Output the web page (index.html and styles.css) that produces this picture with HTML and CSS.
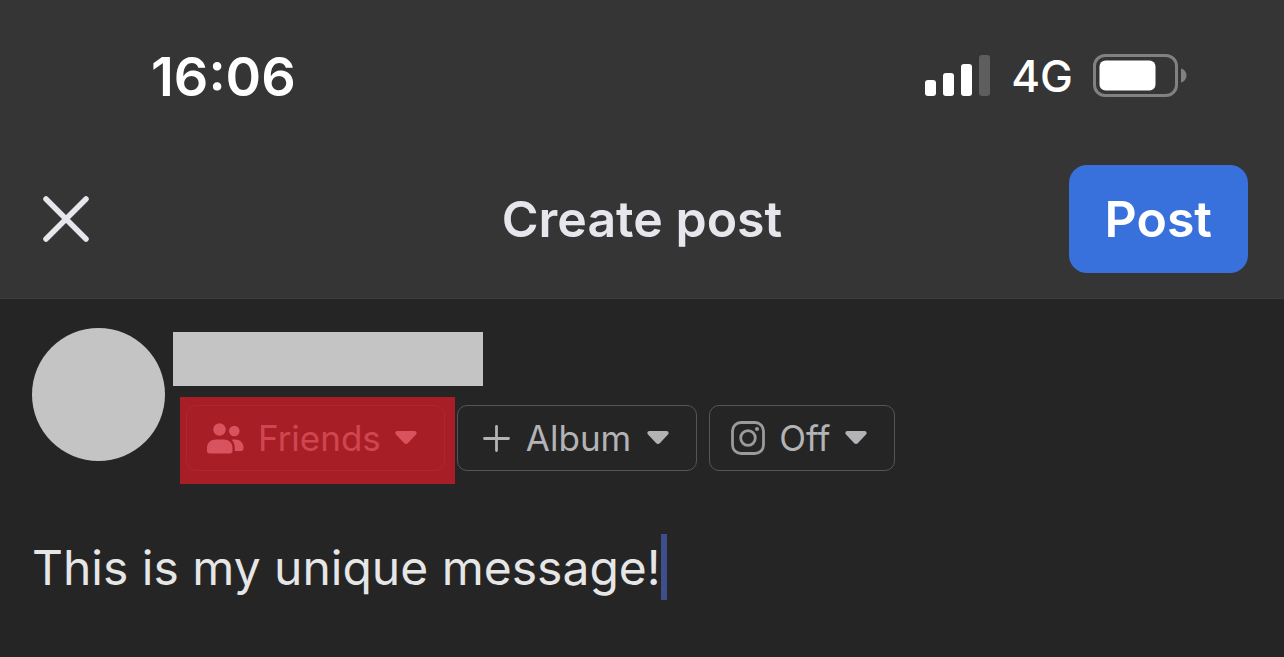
FILE: index.html
```html
<!DOCTYPE html>
<html lang="en">

<head>
    <meta charset="UTF-8">
    <meta name="viewport" content="width=device-width, initial-scale=1.0">
    <title>Create post</title>
    <link rel="stylesheet" href="styles.css">
</head>

<body>
    <div class="status-bar">
        <time class="clock">16:06</time>
        <div class="status-icons">
            <svg class="signal" width="66" height="42" viewBox="0 0 66 42" aria-hidden="true">
                <rect x="0" y="25" width="11" height="16" rx="3" fill="#fff" />
                <rect x="18" y="18" width="11" height="23" rx="3" fill="#fff" />
                <rect x="36" y="9" width="11" height="32" rx="3" fill="#fff" />
                <rect x="54" y="0" width="11" height="41" rx="3" fill="#5e5e5e" />
            </svg>
            <span class="network">4G</span>
            <svg class="battery" width="94" height="44" viewBox="0 0 94 44" aria-hidden="true">
                <rect x="1.5" y="1.5" width="82" height="40" rx="10.5" fill="none" stroke="#818181" stroke-width="3" />
                <rect x="6.5" y="6.5" width="56" height="30" rx="6" fill="#fff" />
                <path d="M88 14.5c3.5 1 5.5 4 5.5 7s-2 6-5.5 7z" fill="#818181" />
            </svg>
        </div>
    </div>

    <header class="header">
        <button type="button" class="close" aria-label="Close">
            <svg width="46" height="46" viewBox="0 0 46 46" aria-hidden="true">
                <path d="M3 3l40 40M43 3L3 43" fill="none" stroke="#e6e6ec" stroke-width="5.5" stroke-linecap="round" />
            </svg>
        </button>
        <h1>Create post</h1>
        <button type="submit" form="post-form" class="post">Post</button>
    </header>

    <main>
        <div class="author">
            <div class="avatar"></div>
            <div class="details">
                <div class="name"></div>
                <div class="options">
                    <div class="highlight">
                        <button type="button" class="chip friends">
                            <svg width="37" height="32" viewBox="0 0 37 32" aria-hidden="true">
                                <circle cx="12.5" cy="7.5" r="6.2" />
                                <circle cx="27.3" cy="9" r="5.3" />
                                <path d="M0 29V26c0-5.500 4-8.500 9-8.500h7.500c5 0 9 3 9 8.500v3c0 1.500-1 2.500-2.500 2.500H2.500C1 31.500 0 30.500 0 29z" />
                                <path d="M24.500 17.500H28c5 0 8.500 3.500 8.500 8v1c0 1.500-1 2.500-2.500 2.500h-6.200V26c0-3.500-1.300-6.500-3.300-8.500z" />
                            </svg>
                            <span>Friends</span>
                            <svg class="arrow" width="22" height="14" viewBox="0 0 22 14" aria-hidden="true">
                                <path d="M2.5 0h17c2 0 2.8 2 1.5 3.5l-8 8.500c-1.200 1.300-2.800 1.300-4 0L1 3.500C-.3 2 .5 0 2.500 0z" />
                            </svg>
                        </button>
                    </div>
                    <button type="button" class="chip album">
                        <svg width="27" height="27" viewBox="0 0 27 27" aria-hidden="true">
                            <path d="M13.5 1.5v24M1.5 13.5h24" fill="none" stroke="#b3b3b6" stroke-width="2.8" stroke-linecap="round" />
                        </svg>
                        <span>Album</span>
                        <svg class="arrow" width="22" height="14" viewBox="0 0 22 14" aria-hidden="true">
                            <path d="M2.5 0h17c2 0 2.8 2 1.5 3.5l-8 8.500c-1.200 1.300-2.800 1.300-4 0L1 3.500C-.3 2 .5 0 2.500 0z" />
                        </svg>
                    </button>
                    <button type="button" class="chip">
                        <svg width="34" height="34" viewBox="0 0 34 34" aria-hidden="true">
                            <g fill="none" stroke="#9b9b9d" stroke-width="2.8">
                                <rect x="1.5" y="1.5" width="31" height="31" rx="8.5" />
                                <circle cx="17" cy="17" r="7.3" />
                            </g>
                            <circle cx="26" cy="8" r="2" fill="#9b9b9d" />
                        </svg>
                        <span>Off</span>
                        <svg class="arrow" width="22" height="14" viewBox="0 0 22 14" aria-hidden="true">
                            <path d="M2.5 0h17c2 0 2.8 2 1.5 3.5l-8 8.500c-1.200 1.300-2.800 1.300-4 0L1 3.500C-.3 2 .5 0 2.500 0z" />
                        </svg>
                    </button>
                </div>
            </div>
        </div>

        <form id="post-form" class="message">
            <input type="text" name="message" aria-label="Message" value="This is my unique message!">
            <span class="cursor"></span>
        </form>
    </main>
</body>

</html>
```
FILE: styles.css
```css
* {
    box-sizing: border-box;
    margin: 0;
    padding: 0;
}

body {
    background-color: #252525;
    font-family: "Inter", "Liberation Sans", sans-serif;
    color: #e6e6e6;
}

button,
input {
    font-family: inherit;
    border: none;
    background: none;
}

svg {
    display: block;
    flex-shrink: 0;
}

.status-bar {
    display: flex;
    justify-content: space-between;
    align-items: center;
    height: 152px;
    padding: 0 97px 0 151px;
    background-color: #353535;
    color: #fff;
}

.clock {
    font-size: 54px;
    font-weight: 600;
}

.status-icons {
    display: flex;
    align-items: center;
    gap: 20px;
}

.network {
    font-size: 44px;
    font-weight: 500;
}

.header {
    display: grid;
    grid-template-columns: 1fr auto 1fr;
    align-items: center;
    padding: 13px 36px 25px;
    background-color: #353535;
    border-bottom: 1px solid #3b3b3b;
}

.close {
    justify-self: start;
    padding: 7px;
}

.header h1 {
    font-size: 50px;
    font-weight: 600;
    color: #e6e6ec;
}

.post {
    justify-self: end;
    padding: 0 36px;
    height: 108px;
    border-radius: 18px;
    background-color: #3871dc;
    color: #fff;
    font-size: 50px;
    font-weight: 600;
}

main {
    padding: 29px 32px;
}

.author {
    display: flex;
    gap: 8px;
}

.avatar {
    width: 133px;
    height: 133px;
    border-radius: 50%;
    background-color: #c4c4c4;
}

.name {
    width: 310px;
    height: 54px;
    margin: 4px 0 11px;
    background-color: #c4c4c4;
}

.options {
    display: flex;
    align-items: flex-start;
    gap: 12px;
    padding-left: 7px;
}

/* red box behind the audience button */
.highlight {
    padding: 8px 10px 13px 6px;
    margin-right: -10px;
    background-color: #a81e26;
}

.chip {
    display: flex;
    align-items: center;
    gap: 14px;
    height: 66px;
    margin-top: 8px;
    padding: 0 27px 0 21px;
    border: 1px solid #555;
    border-radius: 10px;
    color: #b3b3b6;
    fill: #b3b3b6;
    font-size: 35px;
}

.album {
    gap: 16px;
    padding-left: 25px;
}

.friends {
    margin-top: 0;
    padding-left: 20px;
    border-color: #b0262f;
    color: #cf4650;
    fill: #d9535e;
}

.message {
    display: flex;
    align-items: center;
    margin-top: 50px;
}

.message input {
    field-sizing: content;
    outline: none;
    color: #e6e6e6;
    font-size: 48px;
}

.cursor {
    width: 6px;
    height: 66px;
    background-color: #3f4f8e;
}
```
